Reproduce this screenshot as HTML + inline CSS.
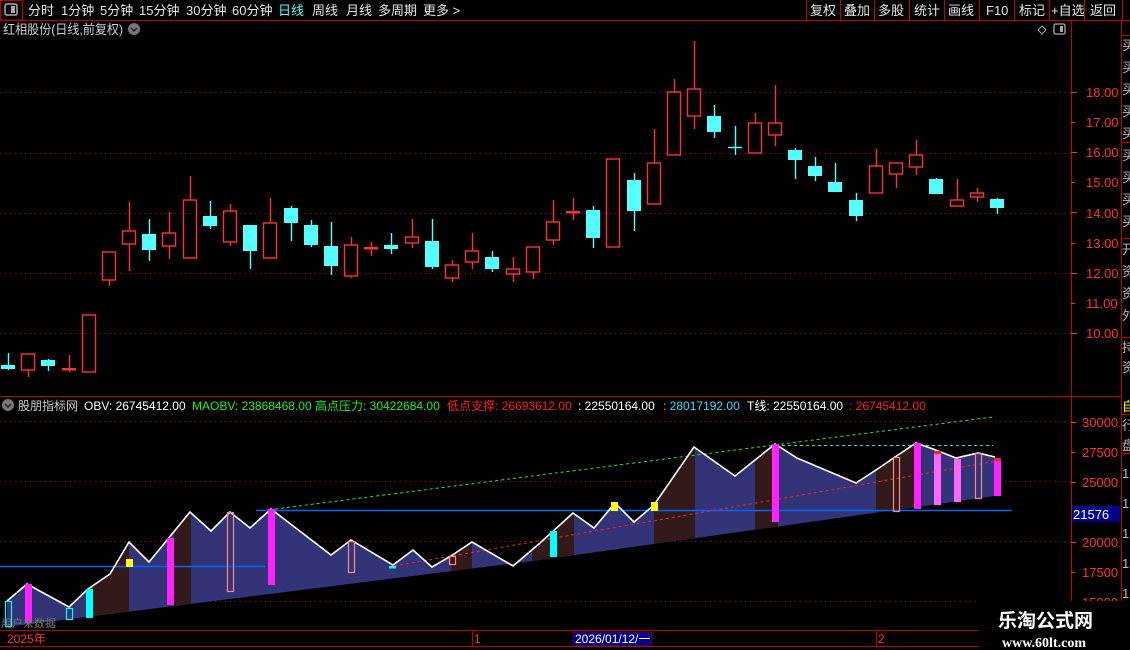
<!DOCTYPE html>
<html><head><meta charset="utf-8"><style>
html,body{margin:0;padding:0;background:#000;width:1130px;height:650px;overflow:hidden}
svg{display:block}
text{font-family:"Liberation Sans","Noto Sans CJK SC",sans-serif}
</style></head><body>
<svg width="1130" height="650" viewBox="0 0 1130 650" xmlns="http://www.w3.org/2000/svg">
<rect width="1130" height="650" fill="#000"/>
<g font-size="13" fill="#e6e6e6">
<rect x="0.5" y="0.5" width="22" height="19.5" fill="none" stroke="#c00000"/>
<rect x="5" y="4" width="12" height="11" rx="2" fill="none" stroke="#aaa" stroke-width="1.5"/><rect x="11" y="6" width="4" height="7" fill="#aaa"/>
<text x="28" y="15">分时</text><text x="61" y="15">1分钟</text><text x="100" y="15">5分钟</text><text x="139" y="15">15分钟</text><text x="186" y="15">30分钟</text><text x="232" y="15">60分钟</text><text x="278" y="15" fill="#54ffff">日线</text><text x="312" y="15">周线</text><text x="346" y="15">月线</text><text x="378" y="15">多周期</text><text x="423" y="15">更多 &gt;</text>
<text x="810" y="15">复权</text><text x="844" y="15">叠加</text><text x="878" y="15">多股</text><text x="914" y="15">统计</text><text x="948" y="15">画线</text><text x="986" y="15">F10</text><text x="1019" y="15">标记</text><text x="1051" y="15">+自选</text><text x="1090" y="15">返回</text>
</g>
<g stroke="#c00000" stroke-width="1">
<path d="M806.5 0V20M840.5 0V20M874.5 0V20M909.5 0V20M944.5 0V20M979.5 0V20M1014.5 0V20M1049.5 0V20M1084.5 0V20M1122.5 0V20"/>
<path d="M0 20.5H1130"/>
<path d="M1071.5 20V630M1121.5 20V630"/>
<path d="M0 396.5H1121"/>
<path d="M0 630.5H980M0 646.5H980"/>
<path d="M472.5 630V646M876.5 630V646"/>
<path d="M1121 35.5H1130M1121 142.5H1130M1121 238.5H1130M1121 337.5H1130M1121 414.5H1130M1121 453.5H1130"/>
</g>
<text x="3" y="34" font-size="13" fill="#d0d0d0" textLength="120" lengthAdjust="spacingAndGlyphs">红相股份(日线,前复权)</text>
<circle cx="134" cy="29" r="6" fill="#777"/><path d="M131 28l3 3 3-3" stroke="#222" stroke-width="1.5" fill="none"/>
<path d="M1042 26l4 4-4 4-4-4z" fill="none" stroke="#aaa"/>
<rect x="1054" y="24" width="11" height="10" rx="1.5" fill="none" stroke="#aaa" stroke-width="1.3"/><rect x="1060" y="26" width="3" height="6" fill="#aaa"/>
<g stroke="#b00000" stroke-dasharray="1,4" stroke-width="1">
<path d="M0 92.5H1071M0 153.5H1071M0 213.5H1071M0 273.5H1071M0 333.5H1071"/>
<path d="M0 421.5H1071M0 481.5H1071M0 541.5H1071M0 601.5H1071"/>
</g>
<g font-size="13" fill="#ff3333">
<text x="1086" y="97">18.00</text><text x="1086" y="127">17.00</text><text x="1086" y="157">16.00</text><text x="1086" y="187">15.00</text><text x="1086" y="218">14.00</text><text x="1086" y="248">13.00</text><text x="1086" y="278">12.00</text><text x="1086" y="308">11.00</text><text x="1086" y="338">10.00</text>
<text x="1082" y="427">30000</text><text x="1082" y="457">27500</text><text x="1082" y="487">25000</text><text x="1082" y="547">20000</text><text x="1082" y="577">17500</text><text x="1082" y="607">15000</text>
</g>
<g stroke="#ff3333"><path d="M1071 92.5h6M1071 122.5h4M1071 152.5h6M1071 182.5h4M1071 212.5h6M1071 243.5h4M1071 273.5h6M1071 303.5h4M1071 333.5h6M1071 422.5h5M1071 452.5h4M1071 482.5h5M1071 542.5h5M1071 572.5h4"/></g>
<rect x="1072" y="506" width="48" height="16" fill="#000088"/><text x="1073" y="519" font-size="13" fill="#fff">21576</text>
<g font-size="13" fill="#bbb"><text x="1122" y="50">买</text><text x="1122" y="72">买</text><text x="1122" y="94">买</text><text x="1122" y="116">买</text><text x="1122" y="138">买</text><text x="1122" y="160">买</text><text x="1122" y="182">买</text><text x="1122" y="204">买</text><text x="1122" y="226">买</text><text x="1122" y="254">开</text><text x="1122" y="276">资</text><text x="1122" y="298">资</text><text x="1122" y="320">外</text><text x="1122" y="352">持</text><text x="1122" y="372">资</text><text x="1122" y="430">行</text><text x="1122" y="450">盘</text><text x="1122" y="478">1</text><text x="1122" y="508">1</text><text x="1122" y="538">1</text><text x="1122" y="568">1</text><text x="1122" y="598">1</text></g>
<text x="1122" y="411" font-size="13" fill="#ffff00">自</text>
<g stroke="#ff3232" stroke-width="1.4" fill="none">
<path d="M28.5 370V377M69.5 355V368M69.5 370V372M109.5 280V286M129.5 202V231M129.5 244V271M169.5 212V233M169.5 246V259M190.5 176V200M230.5 204V211M230.5 242V246M270.5 198V223M351.5 237V245M351.5 276V278M371.5 242V256M412.5 219V237M412.5 243V248M452.5 260V265M452.5 278V282M472.5 233V251M472.5 262V269M513.5 257V269M513.5 274V282M533.5 272V279M553.5 200V222M553.5 240V245M573.5 198V220M654.5 129V163M674.5 79V92M694.5 41V89M694.5 116V129M755.5 113V123M775.5 85V123M775.5 135V146M876.5 149V166M896.5 174V188M916.5 140V155M916.5 167V175M957.5 179V200M977.5 188V193M977.5 197V202"/>
<rect x="21.5" y="354" width="13" height="16"/><rect x="82.5" y="315" width="13" height="57"/><rect x="102.5" y="252" width="13" height="28"/><rect x="122.5" y="231" width="13" height="13"/><rect x="162.5" y="233" width="13" height="13"/><rect x="183.5" y="200" width="13" height="58"/><rect x="223.5" y="211" width="13" height="31"/><rect x="263.5" y="223" width="13" height="35"/><rect x="344.5" y="245" width="13" height="31"/><rect x="405.5" y="237" width="13" height="6"/><rect x="445.5" y="265" width="13" height="13"/><rect x="465.5" y="251" width="13" height="11"/><rect x="506.5" y="269" width="13" height="5"/><rect x="526.5" y="247" width="13" height="25"/><rect x="546.5" y="222" width="13" height="18"/><rect x="606.5" y="159" width="13" height="88"/><rect x="647.5" y="163" width="13" height="41"/><rect x="667.5" y="92" width="13" height="63"/><rect x="687.5" y="89" width="13" height="27"/><rect x="748.5" y="123" width="13" height="30"/><rect x="768.5" y="123" width="13" height="12"/><rect x="869.5" y="166" width="13" height="27"/><rect x="889.5" y="163" width="13" height="11"/><rect x="909.5" y="155" width="13" height="12"/><rect x="950.5" y="200" width="13" height="6"/><rect x="970.5" y="193" width="13" height="4"/>
</g>
<g fill="#ff3232"><rect x="62" y="368" width="14" height="2.5"/><rect x="364" y="247" width="14" height="2.5"/><rect x="566" y="211" width="14" height="2.5"/></g>
<g stroke="#54ffff" stroke-width="1.4">
<path d="M8.5 353V370M48.5 359V371M149.5 219V261M210.5 201V229M250.5 225V269M291.5 206V241M311.5 220V247M331.5 222V275M391.5 233V254M432.5 219V269M492.5 251V272M593.5 206V248M634.5 173V231M714.5 105V138M735.5 126V155M728 147.5H742M795.5 148V179M815.5 157V181M835.5 163V192M856.5 193V221M936.5 178V194M997.5 198V214"/>
</g>
<g fill="#54ffff">
<rect x="1" y="365" width="14" height="4"/><rect x="41" y="360" width="14" height="6"/><rect x="142" y="234" width="14" height="16"/><rect x="203" y="216" width="14" height="10"/><rect x="243" y="225" width="14" height="26"/><rect x="284" y="208" width="14" height="15"/><rect x="304" y="225" width="14" height="20"/><rect x="324" y="246" width="14" height="20"/><rect x="384" y="245" width="14" height="4"/><rect x="425" y="241" width="14" height="26"/><rect x="485" y="257" width="14" height="12"/><rect x="586" y="210" width="14" height="28"/><rect x="627" y="180" width="14" height="31"/><rect x="707" y="116" width="14" height="16"/><rect x="788" y="150" width="14" height="10"/><rect x="808" y="166" width="14" height="10"/><rect x="828" y="182" width="14" height="10"/><rect x="849" y="200" width="14" height="16"/><rect x="929" y="179" width="14" height="15"/><rect x="990" y="199" width="14" height="9"/>
</g>
<circle cx="8" cy="405" r="6" fill="#777"/><path d="M5 404l3 3 3-3" stroke="#222" stroke-width="1.5" fill="none"/>
<g font-size="12">
<text x="18" y="410" fill="#ccc">股朋指标网</text>
<text x="84" y="410" fill="#fff">OBV: 26745412.00</text>
<text x="192" y="410" fill="#22ee22">MAOBV: 23868468.00</text>
<text x="315" y="410" fill="#22ee22">高点压力: 30422684.00</text>
<text x="447" y="410" fill="#ff2020">低点支撑: 26693612.00</text>
<text x="578" y="410" fill="#fff">: 22550164.00</text>
<text x="663" y="410" fill="#33ddff">: 28017192.00</text>
<text x="747" y="410" fill="#fff">T线: 22550164.00</text>
<text x="849" y="410" fill="#ff2020">: 26745412.00</text>
</g>
<defs><clipPath id="cp"><polygon points="7,601 27,584 69,607 88,589 110,574 129,542 149,562 190,512 211,531 230,512 250,528 271,509 331,555 351,540 393,565 413,550 432,567 451,556 472,542 513,566 540,543 573,513 594,528 615,503 634,522 654,505 694,447 735,476 775,444 797,458 856,483 876,470 895,457 916,443 933,449 956,458 978,453 995,457 995,496 540,560 7,627"/></clipPath></defs>
<g clip-path="url(#cp)">
<rect x="0" y="420" width="1000" height="220" fill="#333377"/>
<g fill="#331a1a"><rect x="93" y="420" width="36" height="220"/><rect x="174" y="420" width="17" height="220"/><rect x="451" y="420" width="21" height="220"/><rect x="532" y="420" width="42" height="220"/><rect x="654" y="420" width="41" height="220"/><rect x="755" y="420" width="23" height="220"/><rect x="876" y="420" width="38" height="220"/></g>
</g>
<path d="M0 566.5H265M256 510.5H1012" stroke="#0066ff" stroke-width="1.5"/>
<path d="M275 509L993 417" stroke="#22ee22" stroke-dasharray="3,3"/>
<path d="M394 566L997 461" stroke="#ff2020" stroke-dasharray="3,3"/>
<path d="M782 445.5H993" stroke="#33dddd" stroke-dasharray="3,3"/>
<polyline points="7,601 27,584 69,607 88,589 110,574 129,542 149,562 190,512 211,531 230,512 250,528 271,509 331,555 351,540 393,565 413,550 432,567 451,556 472,542 513,566 540,543 573,513 594,528 615,503 634,522 654,505 694,447 735,476 775,444 797,458 856,483 876,470 895,457 916,443 933,449 956,458 978,453 995,457" fill="none" stroke="#fff" stroke-width="1.6"/>
<g fill="#ff22ff"><rect x="25" y="584" width="7" height="39"/><rect x="167" y="538" width="7" height="67"/><rect x="268" y="509" width="7" height="76"/><rect x="772" y="444" width="7" height="78"/><rect x="914" y="443" width="7" height="66"/><rect x="994" y="460" width="7" height="36"/></g>
<g fill="#ff66ff"><rect x="934" y="453" width="7" height="52"/><rect x="954" y="459" width="7" height="43"/></g>
<g fill="#00ffff"><rect x="86" y="589" width="7" height="29"/><rect x="550" y="531" width="7" height="26"/><rect x="389" y="566" width="7" height="2.5"/></g>
<g fill="none" stroke="#00ffff" stroke-width="1.2"><rect x="5.5" y="601.5" width="6" height="25"/><rect x="66.5" y="608.5" width="6" height="11"/></g>
<g fill="none" stroke="#ff8888" stroke-width="1.2"><rect x="227.5" y="512.5" width="6" height="79"/><rect x="348.5" y="541.5" width="6" height="31"/><rect x="449.5" y="556.5" width="6" height="8"/><rect x="893.5" y="457.5" width="6" height="54"/><rect x="975.5" y="453.5" width="6" height="45"/></g>
<g fill="#ffff00"><rect x="126" y="559" width="7" height="8"/><rect x="611" y="502" width="7" height="9"/><rect x="651" y="502" width="7" height="9"/></g>
<g fill="#ff2020"><rect x="934" y="451" width="7" height="3"/><rect x="994" y="458" width="7" height="3"/></g>
<text x="1" y="627" font-size="11" fill="#777">用户未数据</text>
<g font-size="12">
<text x="7" y="643" fill="#ff3333">2025年</text>
<text x="474" y="643" fill="#ff3333">1</text>
<rect x="573" y="632" width="79" height="14" fill="#000088" stroke="#c00000" stroke-width="0.5"/>
<text x="575" y="643" fill="#fff">2026/01/12/一</text>
<text x="878" y="643" fill="#ff3333">2</text>
</g>
<rect x="979" y="601" width="151" height="49" fill="#000"/>
<text x="998" y="627" font-size="19" font-weight="bold" fill="#fff">乐淘公式网</text>
<text x="1002" y="647" font-size="14" font-weight="bold" fill="#fff" style="font-family:'Liberation Serif',serif">www.60lt.com</text>
</svg>
</body></html>
